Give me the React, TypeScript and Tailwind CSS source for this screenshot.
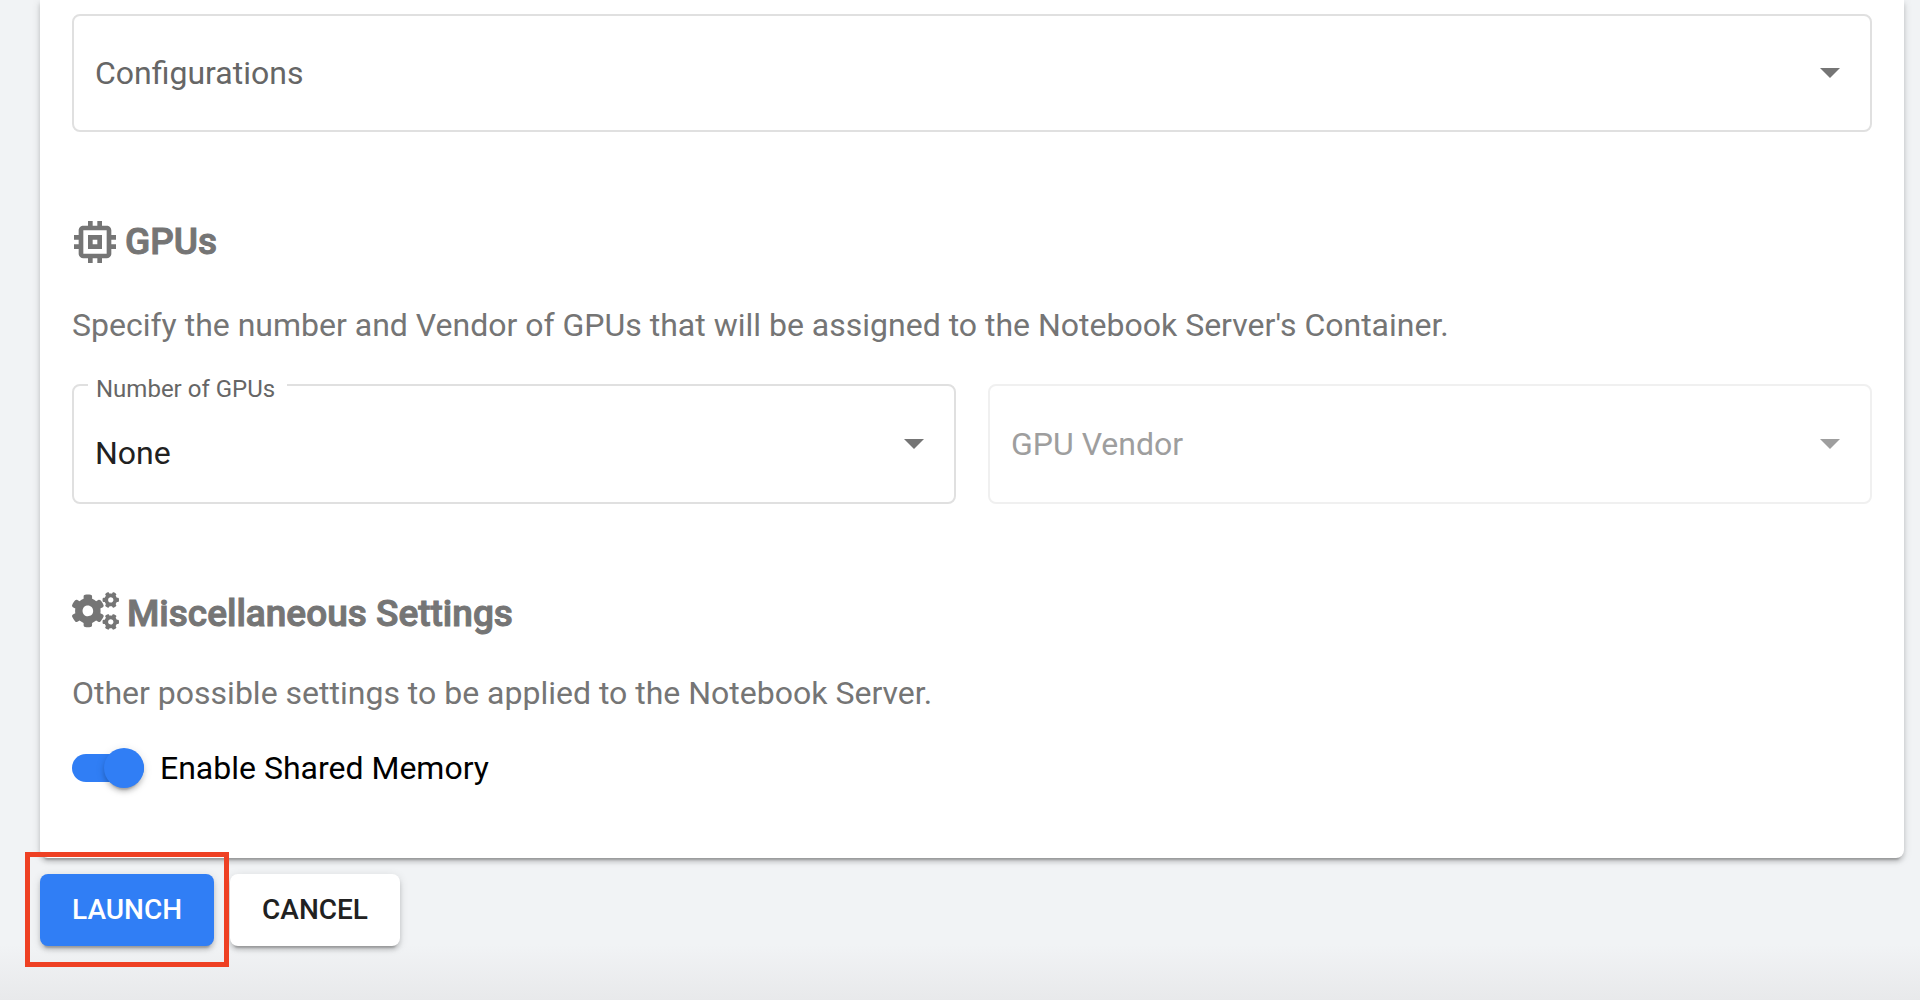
import { useState, type ReactNode, type SelectHTMLAttributes } from "react";
import { FaCogs } from "react-icons/fa";
import { MdMemory } from "react-icons/md";

const elevation =
  "shadow-[0_6px_2px_-4px_rgba(0,0,0,0.2),0_4px_4px_0_rgba(0,0,0,0.14),0_2px_10px_0_rgba(0,0,0,0.12)]";

type OutlinedSelectProps = SelectHTMLAttributes<HTMLSelectElement> & {
  id: string;
  label: string;
  options: string[];
};

/* The label rests inside the empty field and floats onto the border once a value is set. */
function OutlinedSelect({ id, label, options, disabled, value, ...rest }: OutlinedSelectProps) {
  const filled = Boolean(value);
  return (
    <div className="relative flex min-h-[118px] min-w-0 items-center">
      <select
        id={id}
        disabled={disabled}
        value={value}
        className={`w-full appearance-none self-stretch rounded-lg border-2 bg-transparent pt-[18px] pr-20 pl-[21px] text-[32px] text-[#212121] opacity-100 ${
          disabled ? "border-[#f0f0f0]" : "border-[#e0e0e0]"
        }`}
        {...rest}
      >
        {!filled && <option value="" />}
        {options.map((option) => (
          <option key={option}>{option}</option>
        ))}
      </select>
      <label
        htmlFor={id}
        className={`pointer-events-none absolute ${
          filled
            ? "-top-[7px] left-4 bg-white pr-3 pl-2 text-2xl leading-6"
            : "left-[23px] text-[32px] leading-10"
        } ${disabled ? "text-[#9e9e9e]" : "text-[#666]"}`}
      >
        {label}
      </label>
      <svg
        viewBox="0 0 20 10"
        aria-hidden="true"
        className={`pointer-events-none absolute right-8 h-[10px] w-5 ${
          disabled ? "fill-[#9e9e9e]" : "fill-[#757575]"
        }`}
      >
        <path d="M0 0h20L10 10z" />
      </svg>
    </div>
  );
}

function SectionTitle({ icon, children }: { icon: ReactNode; children: ReactNode }) {
  return (
    <h2 className="flex h-12 items-center text-[37px] leading-[48px] font-medium text-[#757575]">
      {icon}
      <span className="[-webkit-text-stroke:1px_#757575]">{children}</span>
    </h2>
  );
}

export default function App() {
  const [configuration, setConfiguration] = useState("");
  const [gpuCount, setGpuCount] = useState("None");
  const [gpuVendor, setGpuVendor] = useState("");
  const [sharedMemory, setSharedMemory] = useState(true);

  return (
    <div className="min-h-screen bg-[linear-gradient(to_top,#e8e9eb,#f1f3f5_56px)] pr-4 pl-10 font-[Roboto,sans-serif]">
      <main className={`rounded-b-lg bg-white px-8 pt-3.5 pb-[70px] ${elevation}`}>
        <OutlinedSelect
          id="configurations"
          label="Configurations"
          options={[]}
          value={configuration}
          onChange={(e) => setConfiguration(e.target.value)}
        />

        <section className="mt-[86px]">
          <SectionTitle icon={<MdMemory className="-ml-[5px] mr-0.5 size-14" />}>GPUs</SectionTitle>
          <p className="mt-[39px] text-[32px] leading-10 text-[#757575]">
            Specify the number and Vendor of GPUs that will be assigned to the Notebook Server's Container.
          </p>
          <div className="mt-[39px] grid min-h-[120px] grid-cols-2 gap-8">
            <OutlinedSelect
              id="gpu-count"
              label="Number of GPUs"
              options={["None", "1", "2", "4", "8"]}
              value={gpuCount}
              onChange={(e) => setGpuCount(e.target.value)}
            />
            <OutlinedSelect
              id="gpu-vendor"
              label="GPU Vendor"
              options={["NVIDIA", "AMD"]}
              disabled={gpuCount === "None"}
              value={gpuVendor}
              onChange={(e) => setGpuVendor(e.target.value)}
            />
          </div>
        </section>

        <section className="mt-[86px]">
          <SectionTitle icon={<FaCogs className="mr-2 mb-1.5 h-[38px] w-[47px]" />}>Miscellaneous Settings</SectionTitle>
          <p className="mt-[35px] text-[32px] leading-10 text-[#757575]">
            Other possible settings to be applied to the Notebook Server.
          </p>
          <label className="mt-[35px] flex w-fit items-center gap-4 text-[32px] leading-10 text-black">
            <input
              type="checkbox"
              role="switch"
              checked={sharedMemory}
              onChange={(e) => setSharedMemory(e.target.checked)}
              className="peer sr-only"
            />
            <span className="flex h-7 w-[72px] items-center rounded-full bg-gray-400 peer-checked:justify-end peer-checked:bg-[#307ef5]">
              <span className={`size-10 rounded-full bg-[#307ef5] ${elevation}`} />
            </span>
            Enable Shared Memory
          </label>
        </section>
      </main>

      <div className="mt-4 flex gap-4">
        <div className="relative">
          <button
            type="button"
            className={`h-[72px] rounded-lg bg-[#307ef5] px-8 text-[28px] font-medium text-white ${elevation}`}
          >
            LAUNCH
          </button>
          <div className="pointer-events-none absolute -inset-x-[15px] -top-[22px] -bottom-[21px] border-5 border-[#ee4023]" />
        </div>
        <button
          type="button"
          className={`h-[72px] rounded-lg bg-white px-8 text-[28px] font-medium text-[#212121] ${elevation}`}
        >
          CANCEL
        </button>
      </div>
    </div>
  );
}
